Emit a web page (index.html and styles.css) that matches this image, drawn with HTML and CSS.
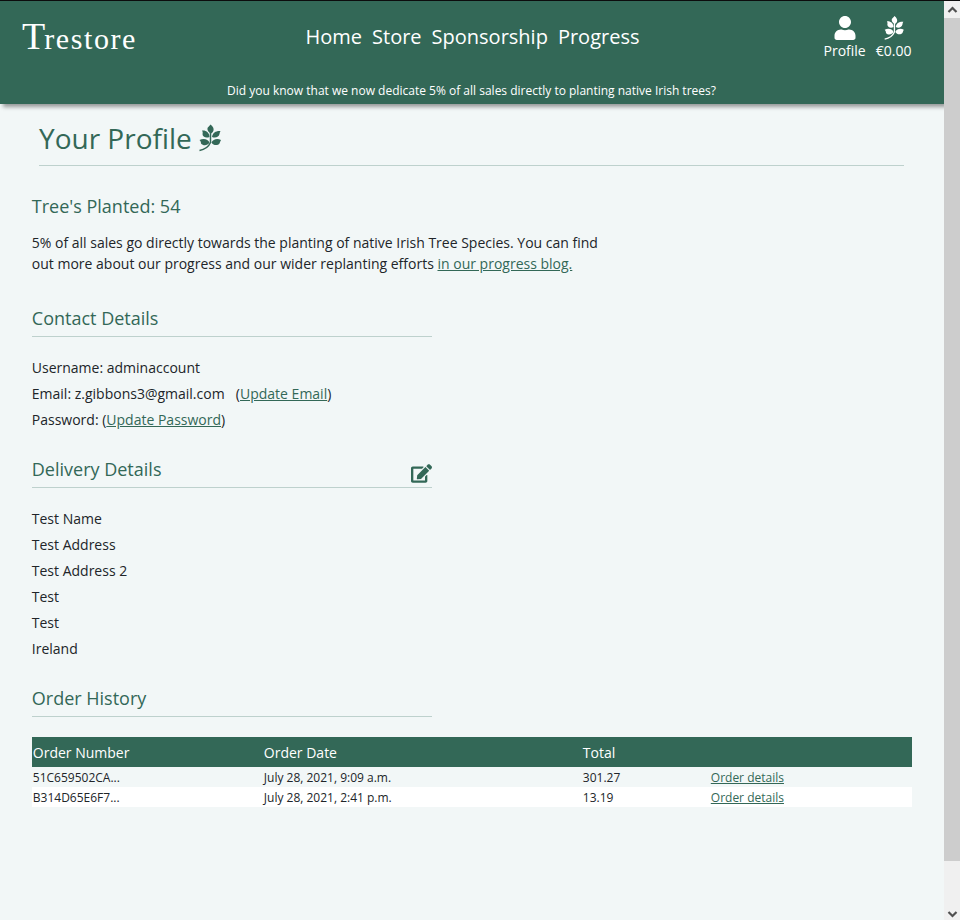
FILE: index.html
```
<!DOCTYPE html>
<html lang="en">
<head>
<meta charset="utf-8">
<title>Trestore - Your Profile</title>
<link rel="stylesheet" href="styles.css">
</head>
<body>
<svg class="symbols" aria-hidden="true">
  <symbol id="sprig" viewBox="0 0 44 54">
    <path d="M23 0C28 4 30 8 29 12C28 15 26 17 24 18C19 16 16 12 17 7C18 5 21 3 23 0Z"/>
    <path d="M6 12C14 11 21 16 21 25C14 28 7 25 7 19C8 16 7 14 6 12Z"/>
    <path d="M43 13C35 12 27 16 26 25C33 28 40 25 41 19C41 17 42 15 43 13Z"/>
    <path d="M1 31C9 27 18 29 21 36C17 43 8 43 4 38C4 35 3 33 1 31Z"/>
    <path d="M44 31C37 27 28 29 25 36C29 43 38 42 41 38C42 35 43 33 44 31Z"/>
    <path class="stem" d="M23 13V36C19 45 12 50 1 52"/>
  </symbol>
</svg>
<div class="window">
  <div class="page">
    <header class="header">
      <div class="bar">
        <a class="logo">Trestore</a>
        <nav class="nav"><a>Home</a><a>Store</a><a>Sponsorship</a><a>Progress</a></nav>
        <div class="account">
          <a class="account-link">
            <svg class="user" viewBox="0 0 448 512"><path d="M224 256c70.7 0 128-57.3 128-128S294.7 0 224 0 96 57.3 96 128s57.3 128 128 128zm89.6 32h-16.7c-22.2 10.2-46.9 16-72.9 16s-50.6-5.8-72.9-16h-16.7C60.2 288 0 348.2 0 422.4V464c0 26.5 21.5 48 48 48h352c26.5 0 48-21.5 48-48v-41.6c0-74.2-60.2-134.4-134.4-134.4z"/></svg>
            <span>Profile</span>
          </a>
          <a class="account-link">
            <svg class="basket"><use href="#sprig"/></svg>
            <span>€0.00</span>
          </a>
        </div>
      </div>
      <p class="notice">Did you know that we now dedicate 5% of all sales directly to planting native Irish trees?</p>
    </header>
    <main class="main">
      <h1 class="title">Your Profile <svg class="title-icon"><use href="#sprig"/></svg></h1>
      <section class="planted">
        <h2>Tree's Planted: 54</h2>
        <p>5% of all sales go directly towards the planting of native Irish Tree Species. You can find<br>out more about our progress and our wider replanting efforts <a class="link">in our progress blog.</a></p>
      </section>
      <section class="contact">
        <h2 class="ruled">Contact Details</h2>
        <ul class="lines">
          <li>Username: adminaccount</li>
          <li>Email: z.gibbons3@gmail.com <span class="update">(<a class="link">Update Email</a>)</span></li>
          <li>Password: (<a class="link">Update Password</a>)</li>
        </ul>
      </section>
      <section class="delivery">
        <h2 class="ruled">Delivery Details
          <svg class="edit" viewBox="0 0 576 512"><path d="M402.6 83.2l90.2 90.2c3.8 3.8 3.8 10 0 13.8L274.4 405.6l-92.8 10.3c-12.4 1.4-22.9-9.1-21.5-21.5l10.3-92.8L388.8 83.2c3.8-3.8 10-3.8 13.8 0zm162-22.9l-48.8-48.8c-15.2-15.2-39.9-15.2-55.2 0l-35.4 35.4c-3.8 3.8-3.8 10 0 13.8l90.2 90.2c3.8 3.8 10 3.8 13.8 0l35.4-35.4c15.2-15.3 15.2-40 0-55.2zM384 346.2V448H64V128h229.8c3.2 0 6.2-1.3 8.5-3.5l40-40c7.6-7.6 2.1-20.5-8.5-20.5H48C21.5 64 0 85.5 0 112v352c0 26.5 21.5 48 48 48h352c26.5 0 48-21.5 48-48V306.2c0-10.7-12.9-16-20.5-8.5l-40 40c-2.2 2.3-3.5 5.3-3.5 8.5z"/></svg>
        </h2>
        <ul class="lines">
          <li>Test Name</li>
          <li>Test Address</li>
          <li>Test Address 2</li>
          <li>Test</li>
          <li>Test</li>
          <li>Ireland</li>
        </ul>
      </section>
      <section class="history">
        <h2 class="ruled">Order History</h2>
        <table class="orders">
          <colgroup><col class="c1"><col class="c2"><col class="c3"><col></colgroup>
          <thead><tr><th>Order Number</th><th>Order Date</th><th>Total</th><th></th></tr></thead>
          <tbody>
            <tr><td>51C659502CA...</td><td>July 28, 2021, 9:09 a.m.</td><td>301.27</td><td><a class="link">Order details</a></td></tr>
            <tr><td>B314D65E6F7...</td><td>July 28, 2021, 2:41 p.m.</td><td>13.19</td><td><a class="link">Order details</a></td></tr>
          </tbody>
        </table>
      </section>
    </main>
  </div>
  <div class="scrollbar">
    <svg class="arrow" viewBox="0 0 16 17"><path d="M4.5 11L8.5 7L12.5 11"/></svg>
    <div class="thumb"></div>
    <svg class="arrow" viewBox="0 0 16 17"><path d="M4.5 9L8.5 13L12.5 9"/></svg>
  </div>
</div>
</body>
</html>
```
FILE: styles.css
```
* { box-sizing: border-box; margin: 0; padding: 0; }
body { font-family: "Open Sans", sans-serif; font-size: 14px; color: #212529; background: #f2f7f7; overflow: hidden; }
.symbols { position: absolute; width: 0; height: 0; }
.stem { fill: none; stroke: currentColor; stroke-width: 3; }
.window { display: flex; height: 920px; border-top: 1px solid #0c0c0d; }
.page { flex: 1; overflow: hidden; }

.header { height: 103px; background: #336857; color: #fff; box-shadow: 3px 3px 4px rgba(0, 0, 0, .38); }
.bar { display: grid; grid-template-columns: 305.5px 1fr 120.5px; height: 77px; }
.logo { padding-left: 22px; font-family: "Liberation Serif", serif; font-size: 30px; letter-spacing: 1.6px; line-height: 70px; height: 70px; }
.logo::first-letter { font-size: 38px; letter-spacing: -1px; }
.nav { display: flex; gap: 10px; font-size: 20px; line-height: 28px; padding-top: 22px; white-space: nowrap; }
.account { display: flex; gap: 10px; padding-top: 15px; white-space: nowrap; }
.account-link { display: flex; flex-direction: column; align-items: center; line-height: 20px; }
.account-link svg { height: 24px; fill: currentColor; margin-bottom: 1px; }
.user { width: 22px; }
.basket { width: 20px; }
.notice { font-size: 12px; line-height: 26px; text-align: center; padding-right: 1px; }

.main { padding: 0 32px 0 31.8px; }
.title { margin-left: 7.2px; width: 865px; height: 62px; padding-top: 15px; border-bottom: 1px solid #bed1cd; display: flex; gap: 7px; color: #336857; font-size: 28px; line-height: 38px; font-weight: 400; }
.title-icon { width: 22px; height: 28px; margin-top: 5px; fill: currentColor; }
h2 { color: #336857; font-size: 18px; line-height: 24px; font-weight: 400; }
.ruled { display: flex; justify-content: space-between; width: 400px; height: 31px; border-bottom: 1px solid #bed1cd; margin-bottom: 18px; }
.planted { padding-top: 28px; }
.planted p { margin-top: 14px; line-height: 21px; }
.contact { margin-top: 32px; }
.delivery { margin-top: 24px; }
.history { margin-top: 24px; }
.lines { list-style: none; line-height: 26px; }
.update { margin-left: 7.6px; }
.link { color: #336857; text-decoration: underline; }
.edit { width: 21px; height: 19px; margin-top: 7px; fill: #336857; }

.orders { width: 880px; margin-top: 20px; table-layout: fixed; border-collapse: collapse; font-size: 12px; }
.c1 { width: 231px; }
.c2 { width: 319px; }
.c3 { width: 128px; }
.orders th { height: 30px; background: #336857; color: #fff; font-size: 14px; font-weight: 400; text-align: left; padding-left: 1px; }
.orders td { height: 20px; padding-left: 1px; }
.orders tbody tr:nth-child(even) { background: #fff; }

.scrollbar { width: 16px; background: #f0f0f0; display: flex; flex-direction: column; }
.arrow { width: 16px; height: 17px; fill: none; stroke: #505050; stroke-width: 2.2; }
.thumb { height: 843px; background: #cdcdcd; margin-bottom: auto; }
```
